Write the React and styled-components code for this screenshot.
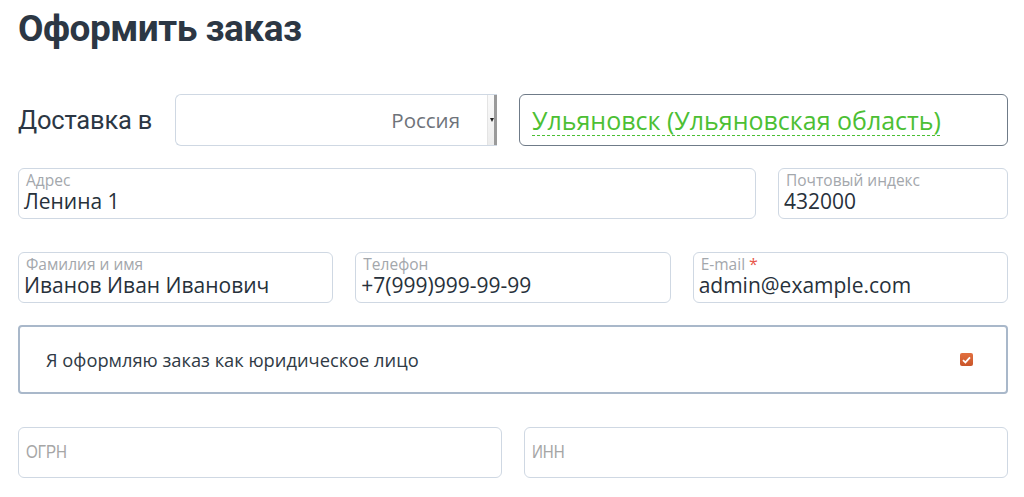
import React from 'react';
import styled, { createGlobalStyle } from 'styled-components';

const GlobalStyle = createGlobalStyle`
    html, body {
        margin: 0;
        padding: 0;
        background: #fff;
        font-family: "Open Sans", "Noto Sans", sans-serif;
        color: #2f3a45;
    }
`

const Page = styled.div`
    padding: 6px 16px 0 18px;
    width: 990px;
`

const Title = styled.h1`
    margin: 0 0 42px;
    font-family: "Roboto", "Open Sans", sans-serif;
    font-weight: 700;
    font-size: 37px;
    letter-spacing: -0.5px;
    line-height: 46px;
    color: #2c3744;
`

const DeliveryRow = styled.div`
    display: flex;
    align-items: center;
    height: 52px;
    margin-bottom: 22px;
`

const DeliveryLabel = styled.div`
    width: 157px;
    font-family: "Roboto", "Open Sans", sans-serif;
    font-size: 25.5px;
    letter-spacing: -0.2px;
    color: #2c3744;
`

const Select = styled.div`
    position: relative;
    box-sizing: border-box;
    width: 322px;
    height: 52px;
    border: 1px solid #cfd8e3;
    border-right: none;
    border-radius: 6px 0 0 6px;
    display: flex;
    align-items: center;
    justify-content: flex-end;
    padding-right: 37px;
    font-size: 20.5px;
    color: #6e737a;
`

const SelectButton = styled.div`
    position: absolute;
    right: 0;
    top: 0;
    bottom: 0;
    width: 10px;
    border-left: 1px solid #e4e4e4;
    border-right: 3px solid #9a9a9a;
    box-sizing: border-box;
    background: linear-gradient(#fafafa, #ececec);
    &::after {
        content: "";
        position: absolute;
        left: 2px;
        top: 23px;
        border-left: 2px solid transparent;
        border-right: 2px solid transparent;
        border-top: 4px solid #222;
    }
`

const CityBox = styled.div`
    box-sizing: border-box;
    margin-left: 22px;
    flex: 1;
    height: 52px;
    border: 1px solid #6f7b88;
    border-radius: 6px;
    display: flex;
    align-items: center;
    padding-left: 12px;
`

const CityLink = styled.span`
    font-size: 25px;
    color: #4cbf34;
    text-decoration: underline dashed #4cbf34;
    text-decoration-thickness: 1px;
    text-underline-offset: 5px;
`

const FieldRow = styled.div`
    display: grid;
    grid-template-columns: ${p => p.cols};
    column-gap: 22px;
    margin-bottom: ${p => p.gap || 33}px;
`

const Field = styled.div`
    box-sizing: border-box;
    height: 51px;
    border: 1px solid #cfd8e3;
    border-radius: 6px;
    padding: ${p => (p.empty ? '0 0 0 5px' : '3px 0 0 5px')};
    display: flex;
    flex-direction: column;
    justify-content: ${p => (p.empty ? 'center' : 'flex-start')};
`

const FieldLabel = styled.div`
    height: 17px;
    font-size: 15.5px;
    line-height: 17px;
    color: #a3a7ac;
    padding-left: 2px;
`

const Star = styled.span`
    color: #e8574a;
    font-size: 16px;
`

const FieldValue = styled.div`
    height: 25px;
    font-size: 21px;
    line-height: 25px;
    color: #27313b;
`

const Placeholder = styled.div`
    font-family: "Liberation Sans", sans-serif;
    font-size: 18px;
    color: #a6a6a6;
    transform: scaleX(0.84);
    transform-origin: left center;
    margin-left: 2px;
`

const LegalBox = styled.label`
    box-sizing: border-box;
    height: 69px;
    border: 2px solid #a9b8ca;
    border-radius: 4px;
    display: flex;
    align-items: center;
    justify-content: space-between;
    padding: 0 33px 0 26px;
    margin-bottom: 33px;
    font-size: 18.3px;
    color: #2f3a45;
`

const Check = styled.span`
    width: 13px;
    height: 13px;
    border-radius: 2px;
    background: linear-gradient(#e2703f, #c9552a);
    display: flex;
    align-items: center;
    justify-content: center;
`

function Input({ label, value, required }) {
    return (
        <Field>
            <FieldLabel>{label}{required && <> <Star>*</Star></>}</FieldLabel>
            <FieldValue>{value}</FieldValue>
        </Field>
    )
}

export default function App() {
    return (
        <Page>
            <GlobalStyle />
            <Title>Оформить заказ</Title>

            <DeliveryRow>
                <DeliveryLabel>Доставка в</DeliveryLabel>
                <Select>
                    Россия
                    <SelectButton />
                </Select>
                <CityBox>
                    <CityLink>Ульяновск (Ульяновская область)</CityLink>
                </CityBox>
            </DeliveryRow>

            <FieldRow cols="1fr 230px">
                <Input label="Адрес" value="Ленина 1" />
                <Input label="Почтовый индекс" value="432000" />
            </FieldRow>

            <FieldRow cols="1fr 1fr 1fr" gap={22}>
                <Input label="Фамилия и имя" value="Иванов Иван Иванович" />
                <Input label="Телефон" value="+7(999)999-99-99" />
                <Input label="E-mail" value="admin@example.com" required />
            </FieldRow>

            <LegalBox>
                Я оформляю заказ как юридическое лицо
                <Check>
                    <svg width="9" height="8" viewBox="0 0 9 8">
                        <path d="M1 4.2 L3.4 6.4 L8 1.4" fill="none" stroke="#fff" strokeWidth="1.8" />
                    </svg>
                </Check>
            </LegalBox>

            <FieldRow cols="1fr 1fr">
                <Field empty><Placeholder>ОГРН</Placeholder></Field>
                <Field empty><Placeholder>ИНН</Placeholder></Field>
            </FieldRow>
        </Page>
    )
}
